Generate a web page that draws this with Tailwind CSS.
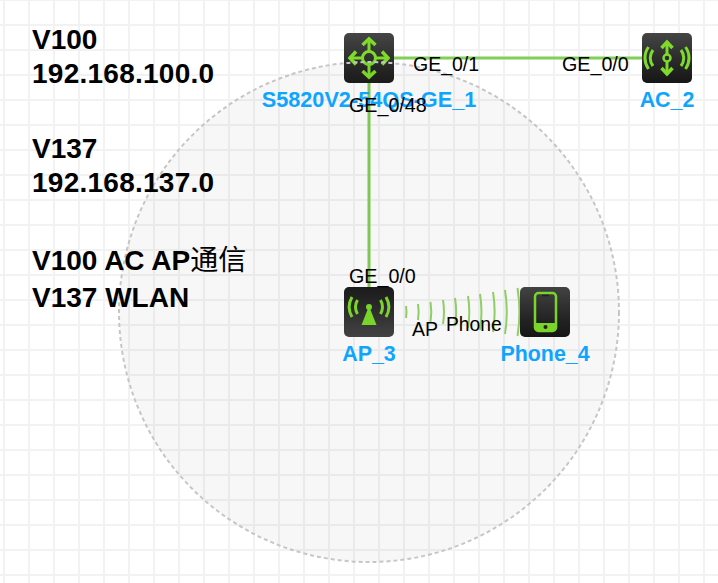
<!DOCTYPE html>
<html lang="en">
  <head>
    <meta charset="UTF-8" />
    <script src="https://cdn.jsdelivr.net/npm/@tailwindcss/browser@4"></script>
    <title>Topology</title>
  </head>
  <body class="bg-white">
    <div class="relative w-[718px] h-[583px] overflow-hidden font-['Liberation_Sans','Noto_Sans_CJK_SC',sans-serif] bg-[linear-gradient(#f2f2f2_2px,transparent_2px),linear-gradient(90deg,#f2f2f2_2px,transparent_2px)] bg-[size:25px_25px] bg-[position:3px_24px]">
      <!-- links and wifi waves -->
      <svg class="absolute left-0 top-0" width="718" height="583" fill="none">
        <path d="M369 58H667M369 58V312" stroke="#82cf58" stroke-width="3" />
        <g stroke="#95d46c" stroke-width="2">
          <path d="M406 306a37 37 0 0 1 0 12" />
          <path d="M418 304a50 50 0 0 1 0 16" />
          <path d="M430.500 302a62 62 0 0 1 0 20" />
          <path d="M443 300a75 75 0 0 1 0 24" />
          <path d="M455 298a87 87 0 0 1 0 28" />
          <path d="M468 296a100 100 0 0 1 0 32" />
          <path d="M480 294a112 112 0 0 1 0 36" />
          <path d="M493 292a125 125 0 0 1 0 40" />
          <path d="M505 290a137 137 0 0 1 0 44" />
          <path d="M517.500 288a150 150 0 0 1 0 48" />
        </g>
      </svg>

      <!-- switch -->
      <div class="absolute left-[344px] top-[33px] size-[50px] rounded-[5px] bg-gradient-to-b from-[#454545] to-[#1c1c1c]">
        <svg width="50" height="50" fill="none" stroke="#7edb2b" stroke-width="3">
          <circle cx="25" cy="25" r="6.500" />
          <path d="M25 18V8M25 32V42M18 25H8M32 25H42" />
          <path d="M18.500 12L25 6L31.500 12M18.500 38L25 44L31.500 38M12 18.500L6 25L12 31.500M38 18.500L44 25L38 31.500" stroke-width="3.500" />
        </svg>
      </div>

      <!-- ac -->
      <div class="absolute left-[642px] top-[33px] size-[50px] rounded-[5px] bg-gradient-to-b from-[#454545] to-[#161616]">
        <svg width="50" height="50" fill="none" stroke="#7edb2b" stroke-width="3">
          <circle cx="25" cy="25" r="3.500" stroke-width="2.500" />
          <path d="M25 21V11M25 29V39" />
          <path d="M19.500 15L25 9L30.500 15M19.500 35L25 41L30.500 35" stroke-width="3.500" />
          <path d="M11 17a13 13 0 0 0 0 16M6.500 14a19 19 0 0 0 0 22M39 17a13 13 0 0 1 0 16M43.500 14a19 19 0 0 1 0 22" />
        </svg>
      </div>

      <!-- ap -->
      <div class="absolute left-[344px] top-[287px] size-[50px] rounded-[5px] bg-gradient-to-b from-[#1c1c1c] to-[#454545]">
        <svg width="50" height="50" fill="none" stroke="#7edb2b" stroke-width="3">
          <circle cx="25" cy="20" r="3" fill="#7edb2b" stroke="none" />
          <path d="M25 19L32.500 38H17.500Z" fill="#7edb2b" stroke="none" />
          <path d="M13.500 13a14 14 0 0 0 0 14M8 10a20 20 0 0 0 0 20M36.500 13a14 14 0 0 1 0 14M42 10a20 20 0 0 1 0 20" />
        </svg>
      </div>

      <!-- phone -->
      <div class="absolute left-[520px] top-[287px] size-[50px] rounded-[5px] bg-gradient-to-b from-[#454545] to-[#161616]">
        <svg width="50" height="50" fill="none">
          <rect x="15" y="6" width="21" height="38" rx="3.500" stroke="#7edb2b" stroke-width="2.500" />
          <path d="M15 36H36V41a3 3 0 0 1 -3 3H18a3 3 0 0 1 -3 -3Z" fill="#7edb2b" />
          <circle cx="25.500" cy="40" r="2" fill="#222" />
          <path d="M22 8.500H29" stroke="#222" stroke-width="1.500" />
        </svg>
      </div>

      <!-- area circle sits over the links and icons -->
      <svg class="absolute left-[118px] top-[61px]" width="502" height="502">
        <circle cx="251" cy="251" r="250" fill="#000" fill-opacity="0.03" stroke="#c6c6c6" stroke-width="2" stroke-dasharray="4 3" />
      </svg>

      <!-- notes -->
      <div class="absolute left-[32px] top-[23px] font-bold text-[28px] leading-[34px] text-black">
        <p>V100</p>
        <p class="tracking-[0.25px]">192.168.100.0</p>
        <p class="mt-[41px]">V137</p>
        <p class="tracking-[0.25px]">192.168.137.0</p>
        <p class="mt-[44px]">V100 AC AP<span class="font-normal">通信</span></p>
        <p class="mt-[3px]">V137 WLAN</p>
      </div>

      <!-- device names -->
      <span class="absolute left-[169px] w-[400px] top-[88px] text-center font-bold text-[21.700px] leading-6 text-[#0fa5ff]">S5820V2-54QS-GE_1</span>
      <span class="absolute left-[567px] w-[200px] top-[88px] text-center font-bold text-[21.400px] leading-6 text-[#0fa5ff]">AC_2</span>
      <span class="absolute left-[269px] w-[200px] top-[342px] text-center font-bold text-[21.400px] leading-6 text-[#0fa5ff]">AP_3</span>
      <span class="absolute left-[445px] w-[200px] top-[342px] text-center font-bold text-[21.400px] leading-6 text-[#0fa5ff]">Phone_4</span>

      <!-- port labels -->
      <span class="absolute left-[413px] top-[52px] text-[19.500px] leading-6 text-black">GE_0/1</span>
      <span class="absolute left-[562px] top-[52px] text-[19.700px] leading-6 text-black">GE_0/0</span>
      <span class="absolute left-[349px] top-[93px] text-[19.700px] leading-6 text-black">GE_0/48</span>
      <span class="absolute left-[349px] top-[264px] text-[19.700px] leading-6 text-black">GE_0/0</span>
      <span class="absolute left-[412px] top-[317px] text-[19.500px] leading-6 text-black">AP</span>
      <span class="absolute left-[446px] top-[313px] text-[19.300px] leading-6 text-black">Phone</span>
    </div>
  </body>
</html>
